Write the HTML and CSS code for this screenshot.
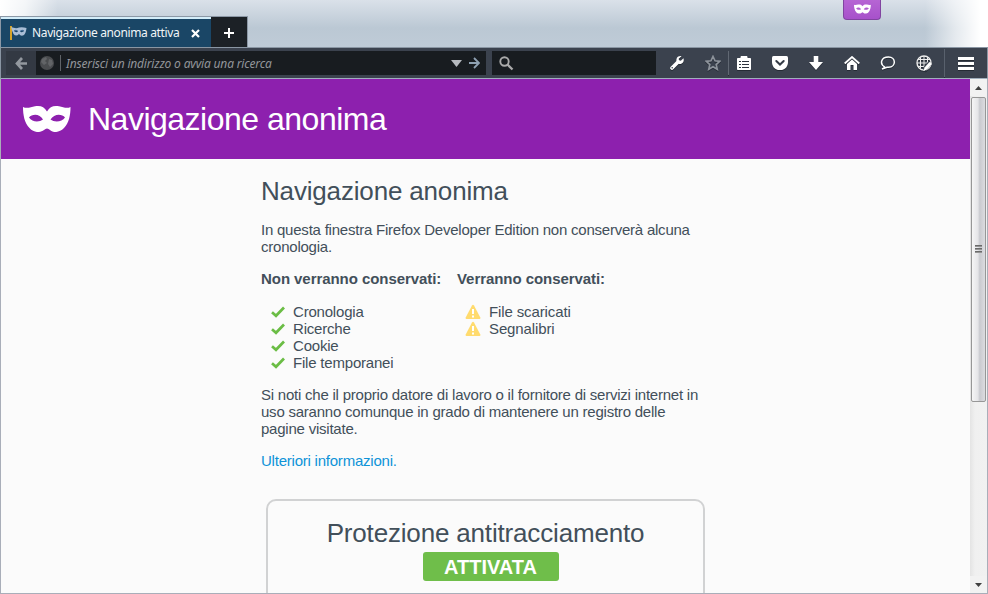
FILE: index.html
```html
<!DOCTYPE html>
<html lang="it">
<head>
<meta charset="utf-8">
<title>Navigazione anonima attiva</title>
<link rel="stylesheet" href="styles.css">
</head>
<body>
<svg class="defs" width="0" height="0" aria-hidden="true">
  <symbol id="mask" viewBox="0 0 48 26"><path fill="currentColor" fill-rule="evenodd" d="M0 1C4 3 8 1 12 .3C18-.7 21 1 24 5.5C27 1 30-.7 36 .3C40 1 44 3 47.500 1C47.500 9 46 17 41 22C36 27 30 27 27 24Q24 21 21 24C17 27 11 27 6.500 22C1.500 17 0 9 0 1ZM6 11.500C9 7.500 17 7.500 20 13.500C16 16.500 9 16 6 11.500ZM42 11.500C39 7.500 31 7.500 27.500 13.500C31.500 16.500 39 16 42 11.500Z"/></symbol>
  <symbol id="check" viewBox="0 0 14 12"><path d="M1 6.200L5 9.800L13 1.500" fill="none" stroke="#6bbd45" stroke-width="2.700"/></symbol>
  <symbol id="warning" viewBox="0 0 16 16"><path d="M7 1.500Q8 0 9 1.500L15.300 13.500Q15.700 15 14.500 15H1.500Q.3 15 .7 13.500Z" fill="#ffdb6e"/><path d="M8 5V10M8 11.500V13.500" stroke="#fff" stroke-width="2"/></symbol>
</svg>
<div class="window">
  <header class="titlebar">
    <div class="tabs">
      <div class="tab">
        <svg class="favicon" width="17" height="16" viewBox="0 0 17 16"><path d="M1 1V15" stroke="#d5a329" stroke-width="2"/><path fill="#a9bdd5" fill-rule="evenodd" d="M1 2Q6 4 9 2.500Q13 2 16.500 3Q16 8 14 10Q11 12 9 9Q6 12 3.500 9Q2 6 1 2ZM4 6Q6 4 8 6.500Q6 8 4 6ZM10 6.500Q12 4 14 6Q12 8 10 6.500Z"/><path d="M4 6Q6 4 8 6.500M10 6.500Q12 4 14 6" stroke="#456f9c" fill="none"/></svg>
        <span class="tab-title">Navigazione anonima attiva</span>
        <svg class="close" width="9" height="9" viewBox="0 0 9 9"><path d="M1 1L8 8M8 1L1 8" stroke="#fff" stroke-width="2.200"/></svg>
      </div>
      <div class="new-tab"><svg width="10" height="10" viewBox="0 0 10 10"><path d="M5 0V10M0 5H10" stroke="#fff" stroke-width="2"/></svg></div>
    </div>
    <div class="private-badge"><svg width="17" height="10"><use href="#mask"/></svg></div>
  </header>
  <nav class="toolbar">
    <div class="back"><svg width="13" height="13" viewBox="0 0 13 13"><path d="M7 1L2 6.500L7 12M2 6.500H12" fill="none" stroke="#93989f" stroke-width="2.700"/></svg></div>
    <div class="urlbar">
      <svg class="globe" width="14" height="14" viewBox="0 0 14 14"><circle cx="7" cy="7" r="7" fill="#4a4c4f"/><path d="M2 3L6 1L7 3L5 5L7 7L4 9L1 6ZM9 3L12 4L13 8L10 11L8 8Z" fill="#626467"/></svg>
      <span class="divider"></span>
      <span class="placeholder">Inserisci un indirizzo o avvia una ricerca</span>
      <svg class="drop" width="11" height="7" viewBox="0 0 11 7"><path d="M0 0H11L5.500 7Z" fill="#b6babf"/></svg>
      <svg class="go" width="11" height="12" viewBox="0 0 11 12"><path d="M0 6H9M5 1L10 6L5 11" fill="none" stroke="#8fa1b2" stroke-width="1.800"/></svg>
    </div>
    <div class="searchbar"><svg width="15" height="15" viewBox="0 0 15 15"><circle cx="5.500" cy="5.500" r="4.200" fill="none" stroke="#aaa" stroke-width="1.900"/><path d="M8.500 8.500L13.500 13.500" stroke="#aaa" stroke-width="2.300"/></svg></div>
    <div class="tools">
      <span class="tool"><svg width="16" height="16" viewBox="0 0 16 16"><path d="M3 13L9 7" stroke="#fff" stroke-width="3.600" stroke-linecap="round"/><path d="M14.500 3.200L11.800 5.800L10 5.300L9.700 3.800L12.500 1.200C9 .2 6.500 3.500 7.700 6.800L10 9C13.500 9.500 15.500 6.500 14.500 3.200Z" fill="#fff"/><circle cx="3.200" cy="12.800" r=".8" fill="#3b424e"/></svg></span>
      <span class="tool star"><svg width="16" height="16" viewBox="0 0 16 16"><path d="M8 1.500L10 5.800L14.700 6.300L11.200 9.500L12.200 14.200L8 11.800L3.800 14.200L4.800 9.500L1.300 6.300L6 5.800Z" fill="none" stroke="#8d939b" stroke-width="1.700"/></svg></span>
      <span class="tool list"><svg width="14" height="14" viewBox="0 0 14 14"><path d="M.5 2.500H4V.5H10V2.500H13.500V13.500H.5Z" fill="#fff" stroke="#fff" stroke-linejoin="round"/><path d="M2 5.500H4M5 5.500H12M2 8.500H4M5 8.500H12M2 11.500H4M5 11.500H12" stroke="#2c333e"/></svg></span>
      <span class="tool"><svg width="16" height="14" viewBox="0 0 16 14"><path d="M1.500 0H14.500Q16 0 16 1.500V6C16 17 0 17 0 6V1.500Q0 0 1.500 0Z" fill="#fff"/><path d="M4.300 5L8 8.500L11.700 5" fill="none" stroke="#343b46" stroke-width="2" stroke-linecap="round"/></svg></span>
      <span class="tool"><svg width="14" height="14" viewBox="0 0 14 14"><path d="M4.700 0H9.300V6H14L7 14L0 6H4.700Z" fill="#fff"/></svg></span>
      <span class="tool"><svg width="16" height="14" viewBox="0 0 16 14"><path d="M.7 7.500L8 1L15.300 7.500" fill="none" stroke="#fff" stroke-width="1.800"/><path d="M8 3.500L13 8V14H9.500V9H6.500V14H3V8Z" fill="#fff"/></svg></span>
      <span class="tool"><svg width="16" height="14" viewBox="0 0 16 14"><path d="M4.500 10.800C-.5 8 1 1 8.500 1S16.500 11 8.500 11.300H7L2 13Q4.500 12 4.500 10.800Z" fill="none" stroke="#fff" stroke-width="1.500"/></svg></span>
      <span class="tool"><svg width="17" height="17" viewBox="0 0 17 17"><circle cx="8" cy="8" r="7" fill="none" stroke="#eee" stroke-width="1.400"/><path d="M8 1V15M4.500 2.500V13.500M11.500 2.500V9M1 8H15M2 4.500H14M2 11.500H9" fill="none" stroke="#eee"/><path d="M8 15L14 8" stroke="#3b424e" stroke-width="4.500"/><path d="M7.500 16L8.500 12.500L13.500 7L16 9L11 14.500Z" fill="#fff"/></svg></span>
      <span class="tool menu"><svg width="16" height="13" viewBox="0 0 16 13"><path d="M0 1.500H16M0 6.500H16M0 11.500H16" stroke="#fff" stroke-width="3"/></svg></span>
    </div>
  </nav>
  <div class="viewport">
    <main class="page">
      <div class="banner"><svg width="48" height="26"><use href="#mask"/></svg><h1>Navigazione anonima</h1></div>
      <div class="content">
        <h2>Navigazione anonima</h2>
        <p class="intro">In questa finestra Firefox Developer Edition non conserverà alcuna<br>cronologia.</p>
        <div class="columns">
          <section class="forget"><h3>Non verranno conservati:</h3>
            <ul><li><svg width="14" height="12"><use href="#check"/></svg>Cronologia</li><li><svg width="14" height="12"><use href="#check"/></svg>Ricerche</li><li><svg width="14" height="12"><use href="#check"/></svg>Cookie</li><li><svg width="14" height="12"><use href="#check"/></svg>File temporanei</li></ul>
          </section>
          <section class="keep"><h3>Verranno conservati:</h3>
            <ul><li><svg width="16" height="16"><use href="#warning"/></svg>File scaricati</li><li><svg width="16" height="16"><use href="#warning"/></svg>Segnalibri</li></ul>
          </section>
        </div>
        <p class="notice">Si noti che il proprio datore di lavoro o il fornitore di servizi internet in<br>uso saranno comunque in grado di mantenere un registro delle<br>pagine visitate.</p>
        <p class="more"><a>Ulteriori informazioni.</a></p>
        <section class="tracking"><h2>Protezione antitracciamento</h2><span class="status">ATTIVATA</span></section>
      </div>
    </main>
    <div class="scrollbar">
      <div class="arrow"><svg width="7" height="4" viewBox="0 0 7 4"><path d="M0 4L3.500 0L7 4Z" fill="#404040"/></svg></div>
      <div class="thumb"><i></i><i></i><i></i></div>
      <div class="track"></div>
      <div class="arrow"><svg width="7" height="4" viewBox="0 0 7 4"><path d="M0 0L3.500 4L7 0Z" fill="#404040"/></svg></div>
    </div>
  </div>
</div>
</body>
</html>
```
FILE: styles.css
```css
* { box-sizing: border-box; }
body { margin: 0; background: #fff; overflow: hidden; font-family: "Liberation Sans", Arial, sans-serif; }
svg { display: block; flex: none; }
.defs { position: absolute; }
h1, h2, h3, p, ul { margin: 0; padding: 0; font-weight: normal; white-space: nowrap; }
.window { width: 988px; height: 594px; display: flex; flex-direction: column; }

.titlebar { height: 47px; display: flex; justify-content: space-between; align-items: flex-start; padding-right: 107px;
  background: linear-gradient(90deg, #fff 0, #fffb 25px, #fff0 58px, #fff0 925px, #fff9 955px, #fff 980px), linear-gradient(#dae1e9, #bbc8d4 28px, #bfcbd7); }
.tabs { display: flex; margin-top: 16px; height: 31px; width: 248px; border: 1px solid #8c98a6; border-bottom: 0; }
.tab { width: 210px; display: flex; align-items: center; background: #1a4666; border-top: 2px solid #d3edf9; padding-left: 9px; color: #f1f5f8; }
.tab-title { font: 12px/16px "Noto Sans", sans-serif; width: 148px; margin-left: 5px; white-space: nowrap; letter-spacing: -.36px; }
.close { margin-left: 11px; }
.new-tab { flex: 1; display: flex; align-items: center; justify-content: center; background: #1c2126; }
.new-tab svg { margin-top: 2px; }
.private-badge { width: 38px; height: 20px; display: flex; justify-content: center; padding-top: 4px; color: #fff; background: linear-gradient(#b665d4, #a751ca); border: 1px solid #8144a0; border-top: 0; border-radius: 0 0 4px 4px; }

.toolbar { height: 32px; display: flex; align-items: center; background: #3b424e; border: 1px solid #8a96a3; border-bottom-color: #a0afbd; padding-left: 5px; }
.back { width: 30px; height: 24px; display: flex; align-items: center; justify-content: center; background: #333943; }
.urlbar { width: 450px; height: 24px; display: flex; align-items: center; background: #181c20; padding-left: 4px; }
.divider { width: 1px; height: 16px; background: #5f6368; margin: 0 5px 0 6px; }
.placeholder { flex: 1; padding-top: 2px; font: italic 12px/16px "Noto Sans", sans-serif; color: #92959a; white-space: nowrap; letter-spacing: -.18px; }
.go { margin: 0 6px 0 7px; }
.searchbar { width: 164px; height: 24px; margin-left: 6px; padding-left: 7px; display: flex; align-items: center; background: #181c20; }
.tools { display: flex; align-items: center; height: 30px; margin-left: 3px; filter: drop-shadow(0 1px 0 #252b34); }
.tool { width: 36px; height: 24px; display: flex; align-items: center; justify-content: center; }
.star { width: 34px; padding-left: 2px; border-right: 1px solid #616873; }
.list { width: 33px; padding-right: 3px; }
.menu { width: 42px; margin-left: 2px; height: 28px; border-left: 1px solid #59616d; }

.viewport { flex: 1; min-height: 0; display: flex; border: 1px solid #a9aeb9; border-top: 0; background: #fbfbfb; }
.page { width: 969px; overflow: hidden; }
.banner { height: 80px; display: flex; align-items: center; padding-left: 22px; color: #fff; background: #8d20ae; }
h1 { font-size: 32px; line-height: 38px; margin-left: 17px; letter-spacing: -.5px; }
.content { margin-left: 260px; width: 448px; padding-top: 16px; font-size: 15px; line-height: 17px; color: #424f5a; }
h2 { font-size: 26px; line-height: 32px; letter-spacing: -.17px; }
.intro, .notice, .more { letter-spacing: -.225px; }
.intro { margin-top: 14px; }
.columns { display: flex; margin-top: 16px; }
.forget { width: 196px; }
h3 { font-size: 15px; line-height: 15px; font-weight: bold; letter-spacing: -.06px; }
ul { list-style: none; margin-top: 17px; }
li { display: flex; align-items: center; height: 17px; padding-left: 10px; gap: 8px; letter-spacing: -.2px; }
.keep li { padding-left: 8px; letter-spacing: -.12px; }
.notice { margin-top: 15px; }
.more { margin-top: 15px; }
a { color: #0e93d8; }
.tracking { width: 439px; height: 120px; margin: 30px 0 0 5px; padding-top: 16px; display: flex; flex-direction: column; align-items: center; border: 2px solid #d1d2d3; border-radius: 10px; }
.status { width: 136px; height: 29px; margin: 3px 0 0 10px; border-radius: 3px; background: #6fbe4a; color: #fff; font-size: 20px; line-height: 30px; font-weight: bold; text-align: center; }
.scrollbar { width: 17px; display: flex; flex-direction: column; background: linear-gradient(90deg, #e4e4e4, #f0f0f0 30%, #f1f1f1); }
.arrow { height: 17px; display: flex; align-items: center; justify-content: center; background: #f2f2f2; }
.thumb { height: 305px; width: 15px; margin: 1px 0 0 1px; padding-bottom: 2px; display: flex; flex-direction: column; align-items: center; justify-content: center; gap: 1px; border: 1px solid #979797; border-radius: 2px; background: linear-gradient(90deg, #f6f6f6, #e5e5e8 45%, #c9cacf 60%, #dcdce0); }
.thumb i { width: 7px; height: 2px; background: linear-gradient(#555, #aaa); }
.track { flex: 1; }
```
